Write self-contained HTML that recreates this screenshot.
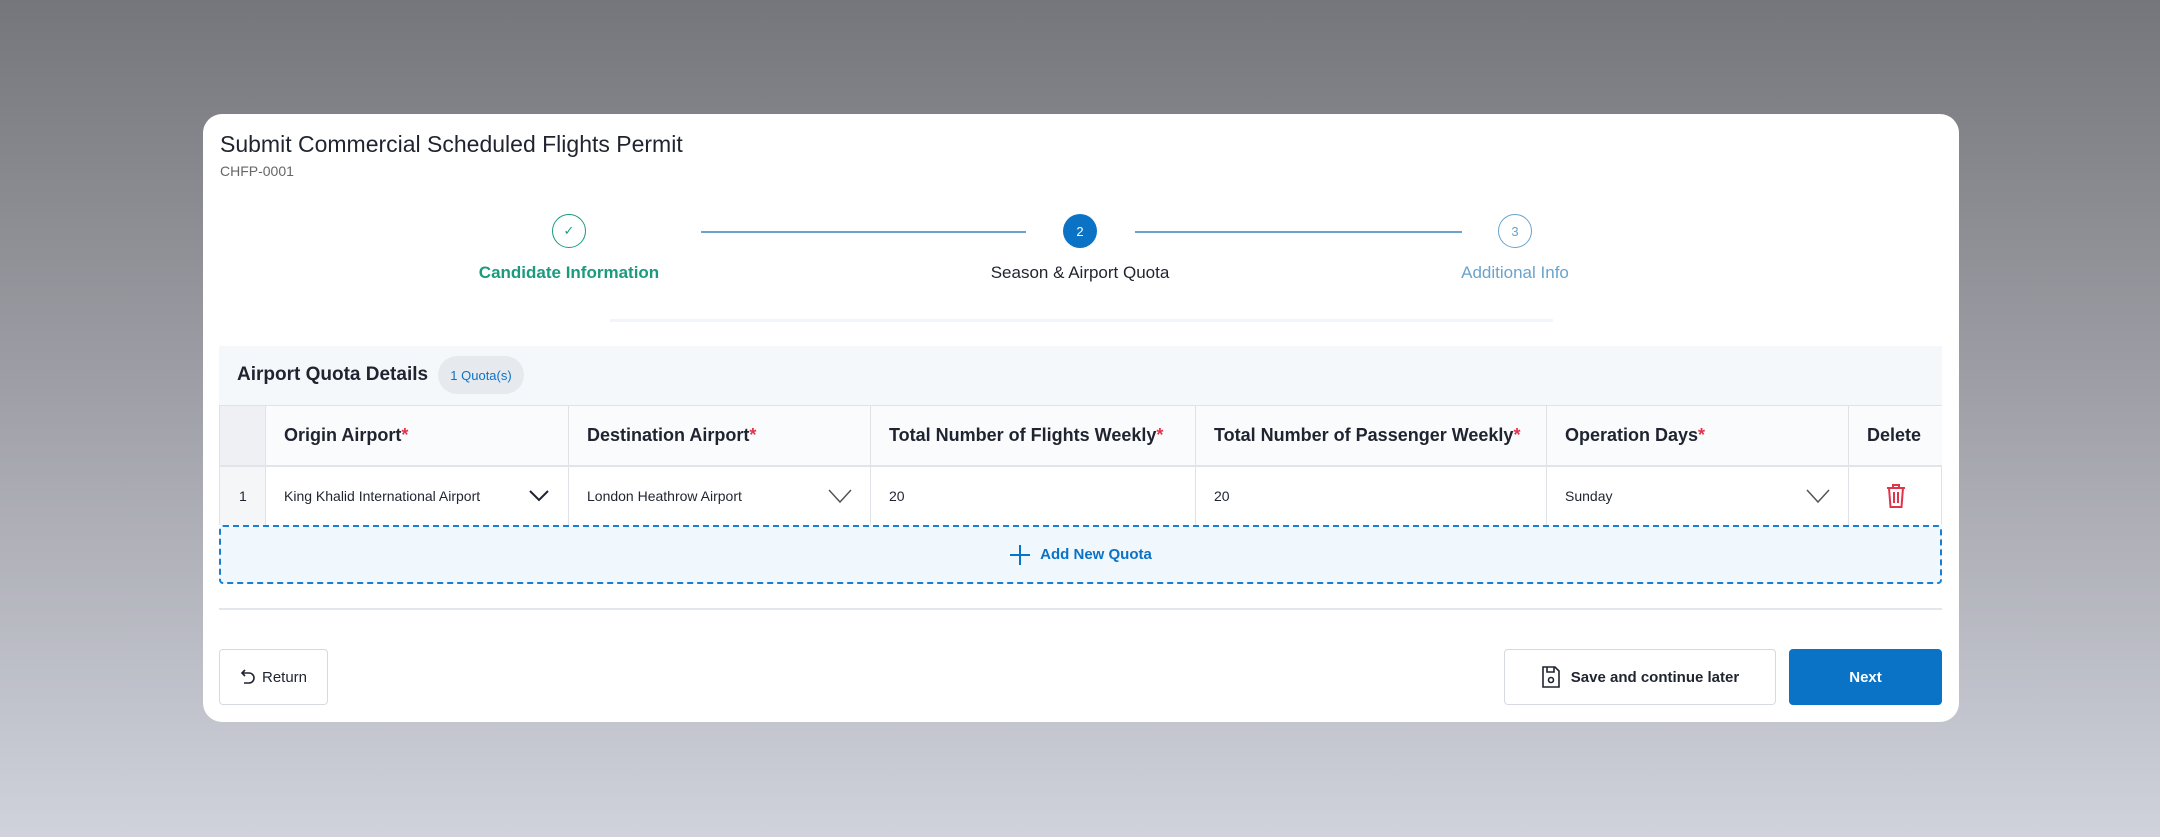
<!DOCTYPE html>
<html><head><meta charset="utf-8"><style>
*{box-sizing:border-box;margin:0;padding:0}
body{width:2160px;height:837px;overflow:hidden;background:linear-gradient(180deg,#75767b 0%,#9d9ea5 45%,#d0d2dc 100%);font-family:"Liberation Sans",sans-serif;color:#1f2430;position:relative}
.a{position:absolute}
.card{left:203px;top:114px;width:1756px;height:608px;background:#fff;border-radius:19px}
.circ{width:34px;height:34px;border-radius:50%;display:flex;align-items:center;justify-content:center;font-size:13px}
.line{height:2px;background:#6aa3cc}
.lab{font-size:17px;transform:translateX(-50%);white-space:nowrap}
.cell{position:absolute;border-right:1px solid #dfe2e7;display:flex;align-items:center;padding-left:18px}
.h{font-size:18px;font-weight:bold;color:#1f2430;background:#fafbfc}
.h span{color:#e0344b}
.d{font-size:14px}
.btn{position:absolute;border:1px solid #d6dae0;border-radius:4px;display:flex;align-items:center;justify-content:center;font-size:15px;font-weight:bold}
</style></head><body>
<div class="a card"></div>
<div class="a" style="left:220px;top:131px;font-size:23px;color:#1f2430">Submit Commercial Scheduled Flights Permit</div>
<div class="a" style="left:220px;top:163px;font-size:14px;color:#666">CHFP-0001</div>

<div class="a circ" style="left:552px;top:214px;border:1.5px solid #1a9b7e;color:#1a9b7e">✓</div>
<div class="a line" style="left:701px;top:231px;width:325px"></div>
<div class="a circ" style="left:1063px;top:214px;background:#0b73c6;color:#fff">2</div>
<div class="a line" style="left:1135px;top:231px;width:327px"></div>
<div class="a circ" style="left:1498px;top:214px;border:1.5px solid #6aa3cc;color:#6aa3cc">3</div>
<div class="a lab" style="left:569px;top:263px;color:#1a9b7e;font-weight:bold">Candidate Information</div>
<div class="a lab" style="left:1080px;top:263px;color:#1f2430">Season &amp; Airport Quota</div>
<div class="a lab" style="left:1515px;top:263px;color:#6aa3cc">Additional Info</div>
<div class="a" style="left:610px;top:319px;width:943px;height:3px;background:#f1f4f8"></div>

<div class="a" style="left:219px;top:346px;width:1723px;height:59px;background:#f4f8fb"></div>
<div class="a" style="left:237px;top:364px;font-size:19px;font-weight:bold">Airport Quota Details</div>
<div class="a" style="left:438px;top:356px;width:86px;height:38px;border-radius:19px;background:#e6eaee;color:#0b73c6;font-size:13px;display:flex;align-items:center;justify-content:center">1 Quota(s)</div>

<div class="a" style="left:219px;top:405px;width:1723px;height:120px;border:1px solid #dfe2e7;border-bottom:none"></div>
<div class="a" style="left:219px;top:465px;width:1723px;height:2px;background:#e1e4e8"></div>
<div class="cell h" style="left:220px;top:406px;width:46px;height:59px;background:#eef0f3"></div>
<div class="cell h" style="left:266px;top:406px;width:303px;height:59px">Origin Airport<span>*</span></div>
<div class="cell h" style="left:569px;top:406px;width:302px;height:59px">Destination Airport<span>*</span></div>
<div class="cell h" style="left:871px;top:406px;width:325px;height:59px">Total Number of Flights Weekly<span>*</span></div>
<div class="cell h" style="left:1196px;top:406px;width:351px;height:59px">Total Number of Passenger Weekly<span>*</span></div>
<div class="cell h" style="left:1547px;top:406px;width:302px;height:59px">Operation Days<span>*</span></div>
<div class="cell h" style="left:1849px;top:406px;width:93px;height:59px;border-right:none">Delete</div>

<div class="cell d" style="left:220px;top:467px;width:46px;height:58px;background:#f4f6f8;padding-left:19px">1</div>
<div class="cell d" style="left:266px;top:467px;width:303px;height:58px">King Khalid International Airport
<svg class="a" style="left:262px;top:21px" width="22" height="14" viewBox="0 0 22 14"><path d="M2 3l9 9 9-9" fill="none" stroke="#1f2430" stroke-width="2"/></svg></div>
<div class="cell d" style="left:569px;top:467px;width:302px;height:58px">London Heathrow Airport
<svg class="a" style="left:258px;top:21px" width="26" height="16" viewBox="0 0 26 16"><path d="M2 2l11 12 11-12" fill="none" stroke="#555" stroke-width="1.5"/></svg></div>
<div class="cell d" style="left:871px;top:467px;width:325px;height:58px">20</div>
<div class="cell d" style="left:1196px;top:467px;width:351px;height:58px">20</div>
<div class="cell d" style="left:1547px;top:467px;width:302px;height:58px">Sunday
<svg class="a" style="left:258px;top:21px" width="26" height="16" viewBox="0 0 26 16"><path d="M2 2l11 12 11-12" fill="none" stroke="#555" stroke-width="1.5"/></svg></div>
<div class="cell d" style="left:1849px;top:467px;width:93px;height:58px;border-right:none;justify-content:center;padding:0">
<svg width="22" height="26" viewBox="0 0 22 26"><path d="M2 5h18M8 5V2h6v3M4 5l1.5 19h11L18 5M9 9v11M13 9v11" fill="none" stroke="#e0344b" stroke-width="2"/></svg></div>

<div class="a" style="left:219px;top:525px;width:1723px;height:59px;background:#f0f7fd;border:2px dashed #1a7fd0;border-radius:4px;display:flex;align-items:center;justify-content:center;color:#0b73c6;font-size:15px;font-weight:bold">
<svg width="22" height="22" viewBox="0 0 22 22" style="margin-right:9px"><path d="M11 1v20M1 11h20" stroke="#0b73c6" stroke-width="2"/></svg>Add New Quota</div>

<div class="a" style="left:219px;top:608px;width:1723px;height:2px;background:#e3e6ea"></div>

<div class="btn" style="left:219px;top:649px;width:109px;height:56px;font-weight:normal">
<svg width="16" height="18" viewBox="0 0 16 18" style="margin-right:6px"><path d="M5 2L2 5l3 3M2 5h7a5 5 0 010 10H4" fill="none" stroke="#1f2430" stroke-width="1.6"/></svg>Return</div>
<div class="btn" style="left:1504px;top:649px;width:272px;height:56px">
<svg width="20" height="24" viewBox="0 0 20 24" style="margin-right:10px"><path d="M2 2h12l4 4v16H2z M6 2v5h7V2" fill="none" stroke="#1f2430" stroke-width="1.6"/><circle cx="10" cy="15" r="2.5" fill="none" stroke="#1f2430" stroke-width="1.6"/></svg>Save and continue later</div>
<div class="btn" style="left:1789px;top:649px;width:153px;height:56px;background:#0b73c6;border-color:#0b73c6;color:#fff">Next</div>
</body></html>
